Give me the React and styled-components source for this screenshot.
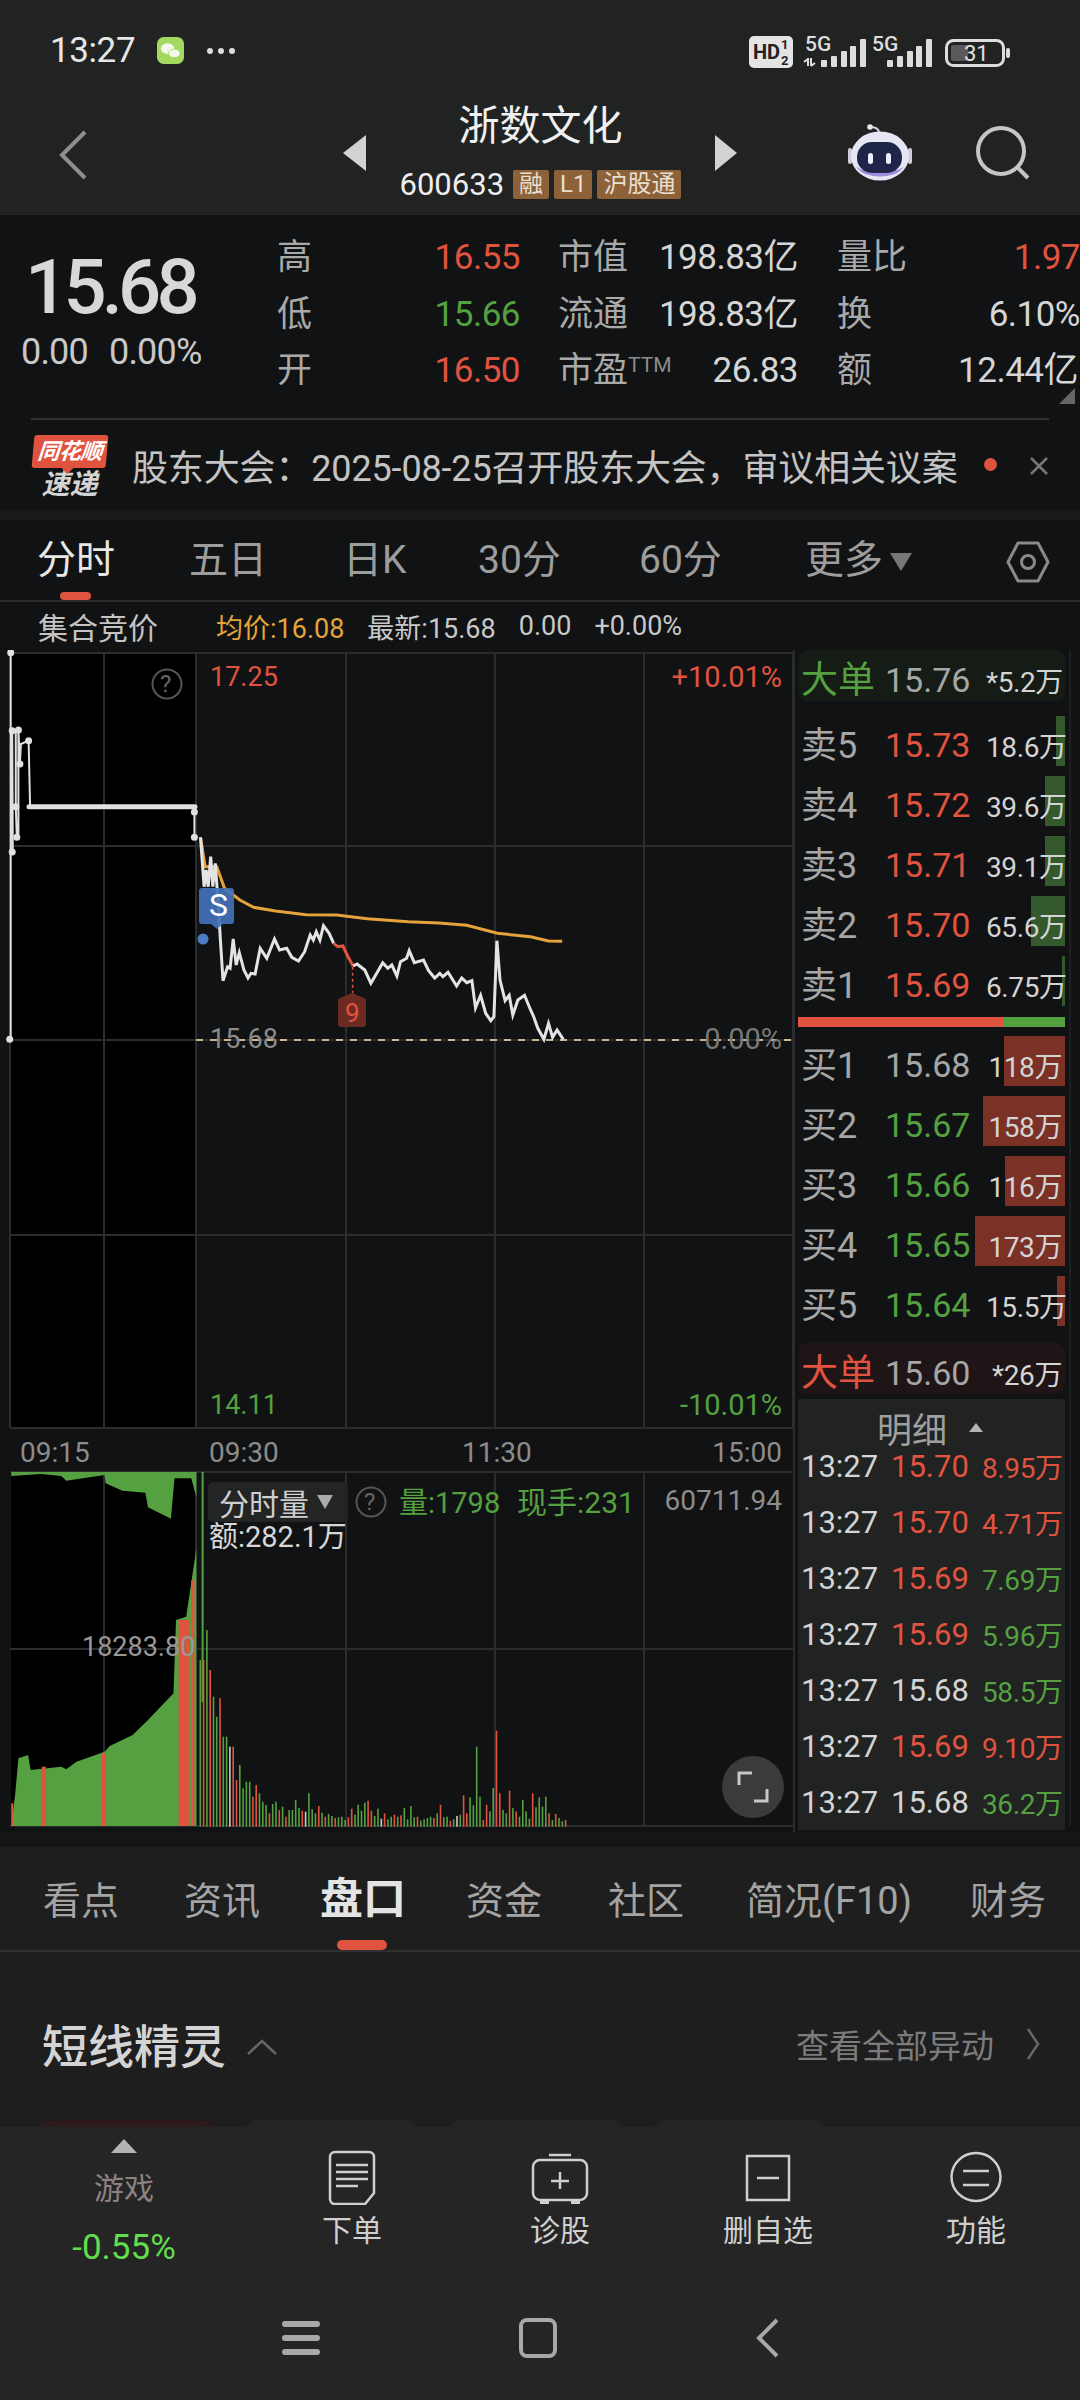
import React from "react";
import styled, { createGlobalStyle } from "styled-components";

const RED = "#e0533f";
const GREEN = "#55a040";
const CJK = `Roboto, "Noto Sans CJK SC", sans-serif`;

const GlobalStyle = createGlobalStyle`
  html, body { margin: 0; padding: 0; background: #1e1e1e; }
  * { box-sizing: border-box; }
  body { font-family: ${CJK}; color: #ddd; }
`;

const Page = styled.div`
  width: 1080px;
  height: 2400px;
  overflow: hidden;
  display: flex;
  flex-direction: column;
  background: #1e1e1e;
`;

/* top status bar + title */
const Top = styled.div`
  height: 215px;
  background: #212322;
  flex: none;
  display: flex;
  flex-direction: column;
`;
const StatusBar = styled.div`
  height: 101px;
  flex: none;
  padding: 0 69px 0 50px;
  display: flex;
  align-items: center;
  justify-content: space-between;
`;
const StatusLeft = styled.div`
  display: flex;
  align-items: center;
  gap: 22px;
`;
const Clock = styled.span`
  font-size: 35px;
  color: #e6e6e6;
  letter-spacing: -0.4px;
`;
const TitleBar = styled.div`
  height: 103px;
  flex: none;
  display: grid;
  grid-template-columns: 100px 1fr 190px;
  padding: 0 50px 0 59px;
  align-items: center;
`;
const BackIcon = styled.svg`
  margin-top: 4px;
`;
const TitleCenter = styled.div`
  display: flex;
  align-items: center;
  gap: 35px;
  padding-left: 184px;
`;
const TitleStack = styled.div`
  display: flex;
  flex-direction: column;
  align-items: center;
  margin-top: -4px;
  width: 277px;
  flex: none;
`;
const Name = styled.div`
  font-size: 41px;
  line-height: 50px;
  color: #f0f0f0;
`;
const CodeRow = styled.div`
  display: flex;
  align-items: center;
  gap: 5px;
  margin-top: 18px;
  white-space: nowrap;
`;
const Code = styled.span`
  font-size: 31px;
  line-height: 32px;
  color: #eee;
  margin-right: 4px;
`;
const Tag = styled.span`
  height: 29px;
  line-height: 29px;
  padding: 0 6px;
  font-size: 24px;
  background: #8d6238;
  color: #e8dfd2;
  border-radius: 2px;
`;
const TitleTools = styled.div`
  display: flex;
  align-items: center;
  justify-content: flex-end;
  gap: 64px;
  svg { flex: none; }
`;

/* quote block */
const Quote = styled.div`
  flex: none;
  height: 295px;
  background: #111213;
  position: relative;
`;
const QuoteTop = styled.div`
  height: 203px;
  display: flex;
`;
const PriceBox = styled.div`
  width: 277px;
  padding-left: 21px;
  padding-top: 30px;
`;
const BigPrice = styled.div`
  font-size: 76px;
  line-height: 84px;
  font-weight: 500;
  color: #d8d8d8;
  padding-left: 4px;
  letter-spacing: -4.8px;
`;
const Change = styled.div`
  display: flex;
  gap: 21px;
  font-size: 36px;
  line-height: 40px;
  color: #c8c8c8;
  margin-top: 3px;
  letter-spacing: -0.8px;
`;
const StatsGrid = styled.div`
  flex: 1;
  display: grid;
  grid-template-columns: 243px 317px 1fr;
  grid-auto-rows: 56.5px;
  padding-top: 13px;
`;
const Stat = styled.div`
  display: flex;
  justify-content: space-between;
  align-items: baseline;
  padding-right: ${(p) => p.$pad ?? 0}px;
  padding-left: ${(p) => p.$lead ?? 0}px;
  white-space: nowrap;
`;
const StatLabel = styled.span`
  font-size: 35px;
  color: #a9a9a9;
  sup {
    font-size: 21px;
    vertical-align: 10px;
    line-height: 0;
    color: #8d8d8d;
  }
`;
const StatValue = styled.span`
  font-size: 35px;
  color: ${(p) => p.$color || "#d6d6d6"};
  letter-spacing: -0.5px;
`;
const Corner = styled.div`
  position: absolute;
  right: 5px;
  top: 173px;
  width: 0;
  height: 0;
  border-left: 16px solid transparent;
  border-bottom: 16px solid #666;
`;
const Notice = styled.div`
  margin: 0 31px;
  border-top: 2px solid #303132;
  height: 92px;
  display: flex;
  align-items: center;
  position: relative;
`;
const NoticeText = styled.div`
  margin-left: 24px;
  font-size: 36px;
  color: #c4c4c4;
  white-space: nowrap;
  letter-spacing: -0.15px;
`;
const LogoBox = styled.div`
  width: 77px;
  display: flex;
  flex-direction: column;
  align-items: center;
  margin-top: 2px;
`;
const LogoFlag = styled.div`
  width: 74px;
  height: 33px;
  background: ${RED};
  border-radius: 3px;
  color: #fff;
  font-size: 22px;
  font-weight: 700;
  font-style: italic;
  text-align: center;
  line-height: 33px;
  position: relative;
  letter-spacing: -0.5px;
  white-space: nowrap;
  transform: skewX(-5deg);
  &::after {
    content: "";
    position: absolute;
    left: 30px;
    bottom: -6px;
    border-left: 6px solid transparent;
    border-right: 6px solid transparent;
    border-top: 6px solid ${RED};
  }
`;
const LogoSub = styled.div`
  font-size: 28px;
  line-height: 26px;
  font-weight: 700;
  font-style: italic;
  color: #d4d4d4;
  margin-top: 4px;
`;
const Dot = styled.span`
  width: 13px;
  height: 13px;
  border-radius: 50%;
  background: ${RED};
  position: absolute;
  left: 953px;
  top: 38px;
`;
const Close = styled.span`
  position: absolute;
  right: 0;
  top: 36px;
`;

/* period tabs */
const Band = styled.div`
  height: 10px;
  flex: none;
  background: #18191a;
`;
const Periods = styled.div`
  height: 82px;
  flex: none;
  background: #111213;
  border-bottom: 2px solid #2c2d2e;
  position: relative;
`;
const PeriodTab = styled.span`
  position: absolute;
  left: ${(p) => p.$x}px;
  top: 17px;
  font-size: 39px;
  line-height: 46px;
  color: ${(p) => (p.$on ? "#e8e8e8" : "#9d9d9d")};
  white-space: nowrap;
`;
const TabMark = styled.i`
  position: absolute;
  left: ${(p) => p.$x}px;
  bottom: 0;
  width: ${(p) => p.$w}px;
  height: ${(p) => p.$h}px;
  border-radius: 5px;
  background: ${RED};
`;
const InfoRow = styled.div`
  height: 48px;
  flex: none;
  background: #111213;
  display: flex;
  align-items: center;
  padding-left: 38px;
  font-size: 27px;
  color: #c8c8c8;
  white-space: nowrap;
`;
const InfoTitle = styled.span`
  font-size: 30px;
  width: 178px;
  color: #c4c4c4;
`;
const InfoItem = styled.span`
  color: ${(p) => p.$color || "#c8c8c8"};
  margin-right: 23px;
`;

/* chart + order book */
const Market = styled.div`
  flex: none;
  height: 1182px;
  background: #111213;
  display: flex;
`;
const ChartCol = styled.div`
  width: 793px;
  position: relative;
  flex: none;
`;
const ChartSvg = styled.svg`
  display: block;
  width: 793px;
  height: 1182px;
`;
const ChartLabel = styled.span`
  position: absolute;
  left: ${(p) => (p.$x !== undefined ? `${p.$x}px` : "auto")};
  right: ${(p) => (p.$r !== undefined ? `${p.$r}px` : "auto")};
  top: ${(p) => p.$y}px;
  font-size: ${(p) => p.$size || 27}px;
  line-height: 34px;
  color: ${(p) => p.$color || "#8f8f8f"};
  white-space: nowrap;
`;
const VolPicker = styled.div`
  position: absolute;
  left: 208px;
  top: 832px;
  width: 140px;
  height: 40px;
  border-radius: 5px;
  background: #232424;
  display: flex;
  align-items: center;
  padding-left: 11px;
  gap: 8px;
  font-size: 30px;
  color: #cfcfcf;
`;
const Expand = styled.div`
  position: absolute;
  left: 722px;
  top: 1106px;
  width: 62px;
  height: 62px;
  border-radius: 50%;
  background: #3a3b3b;
  display: flex;
  align-items: center;
  justify-content: center;
`;
const Book = styled.div`
  flex: 1;
  border-left: 2px solid #2a2b2c;
  display: flex;
  flex-direction: column;
  padding: 0 4px 0 3px;
  position: relative;
  &::after {
    content: "";
    position: absolute;
    top: 0;
    bottom: 6px;
    left: 274px;
    width: 2px;
    background: #1e1f20;
  }
`;
const BigOrder = styled.div`
  height: 51px;
  width: 267px;
  flex: none;
  border-radius: 9px;
  background: ${(p) => p.$bg};
  display: grid;
  grid-template-columns: 84px 101px 1fr;
  align-items: center;
  padding: 0 0 9px 3px;
  margin-top: ${(p) => p.$top}px;
  margin-bottom: ${(p) => p.$bottom}px;
`;
const BigName = styled.span`
  font-size: 37px;
  margin-bottom: 6px;
  color: ${(p) => p.$color};
  white-space: nowrap;
`;
const Level = styled.div`
  height: 50px;
  width: 267px;
  flex: none;
  margin-bottom: 10px;
  display: grid;
  grid-template-columns: 84px 101px 1fr;
  align-items: center;
  padding: 0 0 9px 3px;
  position: relative;
`;
const LevelName = styled.span`
  font-size: 36px;
  margin-bottom: 6px;
  color: #a6a6a6;
  white-space: nowrap;
  position: relative;
`;
const LevelPrice = styled.span`
  font-size: 34px;
  color: ${(p) => p.$color || "#a6a6a6"};
  position: relative;
`;
const LevelVol = styled.span`
  font-size: 28px;
  color: #d4d4d4;
  text-align: right;
  padding-right: 3px;
  white-space: nowrap;
  position: relative;
  letter-spacing: -0.4px;
`;
const VolBar = styled.i`
  position: absolute;
  right: 0;
  top: 0;
  height: 50px;
  background: ${(p) => p.$color};
`;
const Ratio = styled.div`
  height: 10px;
  width: 267px;
  flex: none;
  margin: 1px 0 9px;
  display: flex;
  background: ${GREEN};
  &::before {
    content: "";
    width: 206px;
    background: ${RED};
  }
`;
const Ticks = styled.div`
  flex: 1;
  width: 267px;
  margin-bottom: 7px;
  background: #212222;
  display: flex;
  flex-direction: column;
`;
const TicksHead = styled.div`
  height: 39px;
  flex: none;
  display: flex;
  align-items: center;
  padding: 18px 0 0 79px;
  gap: 22px;
  font-size: 35px;
  color: #9f9f9f;
`;
const Triangle = styled.i`
  width: 0;
  height: 0;
  border-left: ${(p) => p.$w}px solid transparent;
  border-right: ${(p) => p.$w}px solid transparent;
  border-bottom: ${(p) => p.$h}px solid ${(p) => p.$color || "#b4b4b4"};
`;
const Tick = styled.div`
  height: 56px;
  flex: none;
  display: grid;
  grid-template-columns: 90px 91px 1fr;
  align-items: center;
  padding-left: 3px;
  font-size: 31px;
  color: #d4d4d4;
  white-space: nowrap;
`;
const TickPrice = styled.span`
  color: ${(p) => p.$color || "#d4d4d4"};
  font-size: 31px;
`;
const TickVol = styled.span`
  color: ${(p) => p.$color};
  font-size: 28px;
  letter-spacing: -0.4px;
`;

/* lower tabs */
const LowerGap = styled.div`
  height: 15px;
  flex: none;
  background: #141515;
`;
const LowerTabs = styled.div`
  height: 105px;
  flex: none;
  border-bottom: 2px solid #2f3030;
  position: relative;
`;
const LowerTab = styled.span`
  position: absolute;
  left: ${(p) => p.$x}px;
  top: ${(p) => (p.$on ? 27 : 29)}px;
  font-size: ${(p) => (p.$on ? 43 : 38)}px;
  line-height: 50px;
  font-weight: ${(p) => (p.$on ? 700 : 400)};
  color: ${(p) => (p.$on ? "#e4e4e4" : "#a4a4a4")};
  white-space: nowrap;
`;
const Section = styled.div`
  flex: 1;
  position: relative;
  padding: 65px 40px 0 42px;
  display: flex;
  align-items: flex-start;
  justify-content: space-between;
`;
const SectionTitle = styled.div`
  display: flex;
  align-items: center;
  gap: 20px;
  font-size: 46px;
  line-height: 60px;
  font-weight: 500;
  color: #d4d4d4;
`;
const SectionMore = styled.div`
  display: flex;
  align-items: center;
  gap: 32px;
  height: 60px;
  margin-top: -3px;
  font-size: 33px;
  color: #7c7c7c;
`;
const Cards = styled.div`
  position: absolute;
  left: 41px;
  top: 168px;
  display: flex;
  gap: 31px;
`;
const Card = styled.i`
  width: 173px;
  height: 30px;
  border-radius: 12px 12px 0 0;
  background: ${(p) => p.$bg};
`;

/* bottom bar */
const Bottom = styled.div`
  height: 273px;
  flex: none;
  background: #252525;
  position: relative;
  display: flex;
  flex-direction: column;
`;
const ToolRow = styled.div`
  height: 168px;
  display: grid;
  grid-template-columns: 248px repeat(4, 208px);
`;
const GameBox = styled.div`
  display: flex;
  flex-direction: column;
  align-items: center;
  padding-top: 12px;
`;
const GameName = styled.span`
  font-size: 30px;
  line-height: 36px;
  color: #8c8282;
  margin-top: 18px;
`;
const GamePct = styled.span`
  font-size: 35px;
  line-height: 40px;
  color: #62dd4e;
  margin-top: 21px;
`;
const Tool = styled.div`
  display: flex;
  flex-direction: column;
  align-items: center;
  padding-top: 22px;
  font-size: 30px;
  line-height: 36px;
  color: #cfcfcf;
  svg { display: block; margin-bottom: 8px; }
`;
const NavRow = styled.div`
  flex: 1;
  display: flex;
  align-items: center;
  gap: 199px;
  padding: 0 0 20px 282px;
`;

const sells = [
  ["卖5", "15.73", "18.6万", 9],
  ["卖4", "15.72", "39.6万", 20],
  ["卖3", "15.71", "39.1万", 20],
  ["卖2", "15.70", "65.6万", 34],
  ["卖1", "15.69", "6.75万", 3],
];
const buys = [
  ["买1", "15.68", "118万", 61, null],
  ["买2", "15.67", "158万", 82, GREEN],
  ["买3", "15.66", "116万", 60, GREEN],
  ["买4", "15.65", "173万", 90, GREEN],
  ["买5", "15.64", "15.5万", 8, GREEN],
];
const ticks = [
  ["15.70", RED, "8.95万", RED],
  ["15.70", RED, "4.71万", RED],
  ["15.69", RED, "7.69万", GREEN],
  ["15.69", RED, "5.96万", GREEN],
  ["15.68", null, "58.5万", GREEN],
  ["15.69", RED, "9.10万", RED],
  ["15.68", null, "36.2万", GREEN],
];

// points read from the reference crop, in crop units (x / 1.96, 640 + y / 3)
const zx = (x) => +(x / 1.96).toFixed(1);
const zy = (y) => +(y / 3 - 10).toFixed(1);
const toPath = (pts) => pts.map(([x, y], i) => `${i ? "L" : "M"}${zx(x)} ${zy(y)}`).join(" ");

const auction = [
  [21, 38], [21, 1198], [21, 640], [25, 636], [24, 272], [31, 272], [31, 500], [33, 592], [36, 592], [36, 270], [39, 372], [41, 312],
  [56, 302], [59, 500], [381, 500], [381, 516], [381, 592],
];
const priceA = [
  [393, 592], [400, 740], [404, 690], [408, 740], [413, 650], [417, 740], [422, 670], [428, 800], [432, 900], [437, 1022],
  [446, 980], [451, 985], [457, 897], [463, 975], [469, 938], [478, 990], [486, 1014], [492, 1000], [500, 1002], [510, 925],
  [523, 955], [538, 897], [548, 930], [562, 925], [572, 952], [585, 963], [597, 935], [608, 885], [614, 900], [620, 875],
  [627, 900], [634, 857], [645, 880], [654, 910],
];
const priceRed = [[654, 910], [662, 920], [672, 918], [682, 950], [692, 978]];
const priceB = [
  [692, 978], [700, 972], [715, 990], [727, 1030], [742, 990], [750, 968], [760, 985], [768, 975], [778, 1008], [785, 965],
  [797, 955], [802, 932], [812, 968], [830, 960], [840, 992], [852, 1014], [862, 1000], [868, 1010], [878, 997], [895, 1038],
  [905, 1014], [915, 1028], [925, 1022], [932, 1104], [942, 1066], [952, 1120], [962, 1142], [968, 1130], [974, 902], [980, 1020],
  [990, 1082], [998, 1066], [1005, 1125], [1015, 1080], [1028, 1066], [1040, 1110], [1046, 1130], [1054, 1165], [1066, 1198], [1075, 1150],
  [1083, 1192], [1092, 1170], [1104, 1198],
];
const avg = [
  [393, 592], [402, 680], [425, 680], [440, 745], [470, 780], [497, 802], [540, 813], [600, 824], [660, 825], [720, 836],
  [800, 845], [860, 849], [915, 856], [975, 880], [1040, 890], [1075, 903], [1102, 904],
];

// volume histogram, crop units with bottom at y=1218 (second crop starts at 1420)
const vy = (y) => +(1420 + y / 3 - 650).toFixed(1);
const vpath = (pts) => pts.map(([x, y], i) => `${i ? "L" : "M"}${zx(x)} ${vy(y)}`).join(" ");
const auctionVolLow = [
  [22, 1218], [30, 1120], [36, 1015], [55, 1005], [60, 1050], [120, 1040], [130, 1048], [150, 1025], [205, 995], [215, 978],
  [260, 945], [290, 900], [340, 820], [345, 600], [365, 590], [385, 385], [385, 1218],
];
const auctionVolHigh = [
  [22, 156], [22, 168], [80, 162], [120, 168], [130, 182], [205, 165], [207, 190], [240, 212], [285, 218], [290, 262],
  [335, 296], [342, 175], [375, 175], [385, 232], [385, 156],
];
const redStrips = [[22, 4, 1150], [82, 8, 1040], [199, 9, 1000], [350, 22, 600], [375, 6, 480]];

const BAR_HEIGHTS = [
  500, 500, 590, 470, 390, 330, 385, 270, 270, 240,
  240, 140, 185, 115, 135, 135, 90, 125, 100, 75,
  65, 40, 68, 75, 50, 60, 30, 50, 50, 80,
  56, 48, 45, 100, 52, 40, 62, 42, 30, 38,
  32, 26, 28, 30, 20, 28, 54, 36, 66, 48,
  72, 78, 48, 32, 54, 24, 40, 22, 30, 36,
  30, 34, 56, 22, 62, 28, 30, 18, 22, 26,
  30, 26, 40, 66, 28, 30, 18, 22, 32, 36,
  94, 40, 88, 64, 240, 90, 20, 66, 46, 116,
  288, 100, 50, 40, 108, 56, 46, 30, 80, 46,
  24, 100, 58, 88, 60, 90, 40, 20, 38, 26, 16, 20,
];
const barColor = (i) => (i === 90 || i % 5 === 1 || i % 7 === 3 ? RED : i % 23 === 9 ? "#ccc" : GREEN);

const Robot = () => (
  <svg width="64" height="57" viewBox="0 0 64 57">
    <path d="M22 3c6 0 9 2 9 6" fill="none" stroke="#d8d8e8" strokeWidth="2" />
    <circle cx="22" cy="3" r="2.8" fill="#e8e8f0" />
    <rect x="0" y="24" width="4" height="16" rx="2" fill="#cfcfdc" />
    <rect x="60" y="24" width="4" height="16" rx="2" fill="#cfcfdc" />
    <ellipse cx="32" cy="32" rx="29" ry="24.5" fill="#e6e6f4" />
    <path d="M8 42c6 14 42 14 48 0-6 8-42 8-48 0z" fill="#a08ce0" />
    <rect x="9" y="18" width="45" height="31" rx="15" fill="#1e2548" />
    <rect x="20" y="29" width="5" height="11" rx="2.5" fill="#eef" />
    <rect x="38" y="29" width="5" height="11" rx="2.5" fill="#eef" />
  </svg>
);

const StatusIcons = () => (
  <svg width="262" height="36" viewBox="749 30 262 36">
    <rect x="749" y="33" width="44" height="32" rx="5" fill="#e4e4e4" />
    <text x="753" y="56" fontSize="20" fontWeight="700" fill="#222" fontFamily="Roboto">HD</text>
    <text x="781" y="46" fontSize="13" fontWeight="700" fill="#222" fontFamily="Roboto">1</text>
    <text x="781" y="62" fontSize="13" fontWeight="700" fill="#222" fontFamily="Roboto">2</text>
    <text x="805" y="48" fontSize="21" fontWeight="500" fill="#ddd" fontFamily="Roboto">5G</text>
    <path d="M808 55v8m-4-4l4-3m3-1v8m0 0l4-3" stroke="#ddd" strokeWidth="2" fill="none" />
    {[[821, 57], [831, 53], [841, 48], [850, 43], [860, 36]].map(([x, y]) => (
      <rect key={x} x={x} y={y} width="6" height={64 - y} rx="1" fill="#ddd" />
    ))}
    <text x="872" y="48" fontSize="21" fontWeight="500" fill="#ddd" fontFamily="Roboto">5G</text>
    {[[887, 57], [897, 53], [907, 48], [916, 43], [926, 36]].map(([x, y]) => (
      <rect key={x} x={x} y={y} width="6" height={64 - y} rx="1" fill="#ddd" />
    ))}
    <rect x="946.5" y="37.5" width="57" height="25" rx="7" fill="none" stroke="#ddd" strokeWidth="3" />
    <rect x="951" y="42" width="17" height="16" rx="2" fill="#5a5a5a" />
    <text x="964" y="58" fontSize="22" fill="#e4e4e4" fontFamily="Roboto">31</text>
    <rect x="1006" y="45" width="4" height="10" rx="2" fill="#ddd" />
  </svg>
);

export default function App() {
  const bars = BAR_HEIGHTS.map((h, i) => ({
    x: zx(391 + i * 6.45),
    y: vy(1220 - h),
    h: h / 3,
    c: barColor(i),
  }));

  return (
    <Page>
      <GlobalStyle />
      <Top>
        <StatusBar>
          <StatusLeft>
            <Clock>13:27</Clock>
            <svg width="27" height="27" viewBox="0 0 28 28">
              <rect width="28" height="28" rx="7" fill="#a3d861" />
              <ellipse cx="11" cy="12" rx="7" ry="5.5" fill="#f4f8ea" />
              <ellipse cx="18" cy="17" rx="6" ry="4.5" fill="#f4f8ea" stroke="#a3d861" />
            </svg>
            <svg width="32" height="8" viewBox="0 0 32 8">
              <circle cx="4" cy="4" r="3" fill="#ddd" />
              <circle cx="15" cy="4" r="3" fill="#ddd" />
              <circle cx="26" cy="4" r="3" fill="#ddd" />
            </svg>
          </StatusLeft>
          <StatusIcons />
        </StatusBar>
        <TitleBar>
          <BackIcon width="28" height="50" viewBox="0 0 28 50">
            <path d="M26 2L3 25l23 23" fill="none" stroke="#8e8e8e" strokeWidth="4" />
          </BackIcon>
          <TitleCenter>
            <svg width="24" height="36" viewBox="0 0 24 36" style={{ flex: "none" }}>
              <path d="M23 0v36L0 18z" fill="#d2d2d2" />
            </svg>
            <TitleStack>
              <Name>浙数文化</Name>
              <CodeRow>
                <Code>600633</Code>
                <Tag>融</Tag>
                <Tag>L1</Tag>
                <Tag>沪股通</Tag>
              </CodeRow>
            </TitleStack>
            <svg width="24" height="36" viewBox="0 0 24 36" style={{ flex: "none" }}>
              <path d="M1 0v36l22-18z" fill="#d2d2d2" />
            </svg>
          </TitleCenter>
          <TitleTools>
            <Robot />
            <svg width="54" height="54" viewBox="0 0 54 54">
              <circle cx="25" cy="25" r="23" fill="none" stroke="#c6c6c6" strokeWidth="4" />
              <path d="M41 41l11 11" stroke="#c6c6c6" strokeWidth="4" />
            </svg>
          </TitleTools>
        </TitleBar>
      </Top>

      <Quote>
        <QuoteTop>
          <PriceBox>
            <BigPrice>15.68</BigPrice>
            <Change>
              <span>0.00</span>
              <span>0.00%</span>
            </Change>
          </PriceBox>
          <StatsGrid>
            <Stat>
              <StatLabel>高</StatLabel>
              <StatValue $color={RED}>16.55</StatValue>
            </Stat>
            <Stat $pad={39} $lead={38}>
              <StatLabel>市值</StatLabel>
              <StatValue>198.83亿</StatValue>
            </Stat>
            <Stat>
              <StatLabel>量比</StatLabel>
              <StatValue $color={RED}>1.97</StatValue>
            </Stat>
            <Stat>
              <StatLabel>低</StatLabel>
              <StatValue $color={GREEN}>15.66</StatValue>
            </Stat>
            <Stat $pad={39} $lead={38}>
              <StatLabel>流通</StatLabel>
              <StatValue>198.83亿</StatValue>
            </Stat>
            <Stat>
              <StatLabel>换</StatLabel>
              <StatValue>6.10%</StatValue>
            </Stat>
            <Stat>
              <StatLabel>开</StatLabel>
              <StatValue $color={RED}>16.50</StatValue>
            </Stat>
            <Stat $pad={39} $lead={38}>
              <StatLabel>
                市盈<sup>TTM</sup>
              </StatLabel>
              <StatValue>26.83</StatValue>
            </Stat>
            <Stat $pad={2}>
              <StatLabel>额</StatLabel>
              <StatValue>12.44亿</StatValue>
            </Stat>
          </StatsGrid>
        </QuoteTop>
        <Corner />
        <Notice>
          <LogoBox>
            <LogoFlag>同花顺</LogoFlag>
            <LogoSub>速递</LogoSub>
          </LogoBox>
          <NoticeText>股东大会：2025-08-25召开股东大会，审议相关议案</NoticeText>
          <Dot />
          <Close>
            <svg width="20" height="20" viewBox="0 0 20 20">
              <path d="M2 2l16 16M18 2L2 18" stroke="#777" strokeWidth="2.5" />
            </svg>
          </Close>
        </Notice>
      </Quote>

      <Band />
      <Periods>
        <PeriodTab $x={37} $on>分时</PeriodTab>
        <PeriodTab $x={189}>五日</PeriodTab>
        <PeriodTab $x={343}>日K</PeriodTab>
        <PeriodTab $x={478}>30分</PeriodTab>
        <PeriodTab $x={639}>60分</PeriodTab>
        <PeriodTab $x={805}>更多</PeriodTab>
        <svg width="22" height="18" viewBox="0 0 22 18" style={{ position: "absolute", left: 890, top: 33 }}>
          <path d="M0 0h22L11 18z" fill="#777" />
        </svg>
        <svg width="44" height="42" viewBox="0 0 44 42" style={{ position: "absolute", left: 1006, top: 21 }}>
          <path d="M12 2h20l10 19-10 19H12L2 21z" fill="none" stroke="#8a8a8a" strokeWidth="3" strokeLinejoin="round" />
          <circle cx="22" cy="21" r="6.5" fill="none" stroke="#8a8a8a" strokeWidth="3" />
        </svg>
        <TabMark $x={60} $w={31} $h={8} />
      </Periods>
      <InfoRow>
        <InfoTitle>集合竞价</InfoTitle>
        <InfoItem $color="#e3a53a">均价:16.08</InfoItem>
        <InfoItem>最新:15.68</InfoItem>
        <InfoItem>0.00</InfoItem>
        <InfoItem>+0.00%</InfoItem>
      </InfoRow>

      <Market>
        <ChartCol>
          <ChartSvg viewBox="0 0 793 1182">
            <rect x="11" y="2" width="185" height="776" fill="#000" />
            <rect x="11" y="822" width="185" height="354" fill="#000" />
            <g stroke="#2b2c2d" strokeWidth="2" fill="none">
              <path d="M10 3H793M10 196H793M10 390H793M10 585H793M10 778H793M10 822H793M10 999H793M10 1176H793" />
              <path d="M104 2V778M196 2V778M346 2V778M495 2V778M644 2V778M104 822V1176M196 822V1176M346 822V1176M495 822V1176M644 822V1176" />
              <path d="M10 2V778M793 2V778" />
            </g>

            {/* volume, auction part */}
            <path d={`${vpath(auctionVolLow)}Z`} fill={GREEN} />
            <path d={`${vpath(auctionVolHigh)}Z`} fill={GREEN} />
            {redStrips.map(([x, w, top]) => (
              <rect key={x} x={zx(x)} y={vy(top)} width={w / 1.96} height={(1218 - top) / 3} fill={RED} />
            ))}
            <path d={`M${zx(397)} 822V1052`} stroke={GREEN} strokeWidth="2" />
            {bars.map((b, i) => (
              <rect key={i} x={b.x} y={b.y} width="1.6" height={b.h} fill={b.c} />
            ))}

            {/* price */}
            <path d="M196 390H793" stroke="#c9b690" strokeWidth="2" strokeDasharray="7 7" />
            <path d={toPath(auction)} fill="none" stroke="#e0e0e0" strokeWidth="2" />
            <path d={`M29 ${zy(500)}H195`} stroke="#e0e0e0" strokeWidth="5" strokeLinecap="round" />
            {[[21, 38], [19, 1198], [24, 272], [36, 270], [56, 302], [31, 500], [33, 592], [24, 636], [381, 516], [381, 592], [39, 372]].map(([x, y]) => (
              <circle key={`${x}-${y}`} cx={zx(x)} cy={zy(y)} r="3.5" fill="#e0e0e0" />
            ))}
            <path d={toPath(avg)} fill="none" stroke="#e5a33c" strokeWidth="3" />
            <path d={toPath(priceA)} fill="none" stroke="#e4e4e4" strokeWidth="3" />
            <path d={toPath(priceRed)} fill="none" stroke={RED} strokeWidth="3" />
            <path d={toPath(priceB)} fill="none" stroke="#e4e4e4" strokeWidth="3" />

            {/* S marker */}
            <path d="M199 241a3 3 0 0 1 3-3h29a3 3 0 0 1 3 3v30a3 3 0 0 1-3 3h-8l-6 5-6-5h-9a3 3 0 0 1-3-3z" fill="#4272b8" fillOpacity="0.92" />
            <circle cx="203" cy="289" r="5.5" fill="#4a7cc4" />
            {/* 9 marker */}
            <path d={`M${zx(691)} ${zy(980)}V${zy(1060)}`} stroke={RED} strokeDasharray="3 3" strokeWidth="1.5" />
            <path d="M338 351a3 3 0 0 1 2-3l12-5 12 5a3 3 0 0 1 2 3v23a3 3 0 0 1-3 3h-22a3 3 0 0 1-3-3z" fill="#6b2a22" />

            {/* question marks */}
            <circle cx="167" cy="34" r="14.5" fill="none" stroke="#555" strokeWidth="2" />
            <circle cx="371" cy="852" r="14.5" fill="none" stroke="#555" strokeWidth="2" />
          </ChartSvg>

          <ChartLabel $x={210} $y={10} $color={RED}>17.25</ChartLabel>
          <ChartLabel $r={11} $y={10} $color={RED} $size={29}>+10.01%</ChartLabel>
          <ChartLabel $x={210} $y={372} $color="#8a8a8a">15.68</ChartLabel>
          <ChartLabel $r={11} $y={372} $color="#777" $size={29}>0.00%</ChartLabel>
          <ChartLabel $x={210} $y={738} $color={GREEN}>14.11</ChartLabel>
          <ChartLabel $r={11} $y={738} $color={GREEN} $size={29}>-10.01%</ChartLabel>
          <ChartLabel $x={160} $y={17} $color="#666" $size={24}>?</ChartLabel>
          <ChartLabel $x={364} $y={835} $color="#666" $size={24}>?</ChartLabel>
          <ChartLabel $x={209} $y={238} $color="#fff" $size={32}>S</ChartLabel>
          <ChartLabel $x={345} $y={346} $color={RED} $size={26}>9</ChartLabel>

          <ChartLabel $x={20} $y={786} $color="#8c8c8c" $size={28}>09:15</ChartLabel>
          <ChartLabel $x={209} $y={786} $color="#8c8c8c" $size={28}>09:30</ChartLabel>
          <ChartLabel $x={462} $y={786} $color="#8c8c8c" $size={28}>11:30</ChartLabel>
          <ChartLabel $r={11} $y={786} $color="#8c8c8c" $size={28}>15:00</ChartLabel>

          <VolPicker>
            分时量
            <svg width="16" height="14" viewBox="0 0 16 14">
              <path d="M0 0h16L8 14z" fill="#aaa" />
            </svg>
          </VolPicker>
          <ChartLabel $x={209} $y={870} $color="#d8d8d8" $size={29}>额:282.1万</ChartLabel>
          <ChartLabel $x={399} $y={836} $color={GREEN} $size={29}>量:1798</ChartLabel>
          <ChartLabel $x={517} $y={836} $color={GREEN} $size={30}>现手:231</ChartLabel>
          <ChartLabel $r={11} $y={834} $color="#8d8d8d" $size={28}>60711.94</ChartLabel>
          <ChartLabel $x={82} $y={980} $color="#999">18283.80</ChartLabel>

          <Expand>
            <svg width="32" height="32" viewBox="0 0 32 32">
              <path d="M2 14V2h13M30 18v12H17" fill="none" stroke="#c8c8c8" strokeWidth="3" />
            </svg>
          </Expand>
        </ChartCol>

        <Book>
          <BigOrder $bg="#141c15" $top={0} $bottom={15}>
            <BigName $color={GREEN}>大单</BigName>
            <LevelPrice>15.76</LevelPrice>
            <LevelVol>*5.2万</LevelVol>
          </BigOrder>
          {sells.map(([name, price, vol, w]) => (
            <Level key={name}>
              <VolBar $color="#33592c" style={{ width: w }} />
              <LevelName>{name}</LevelName>
              <LevelPrice $color={RED}>{price}</LevelPrice>
              <LevelVol>{vol}</LevelVol>
            </Level>
          ))}
          <Ratio />
          {buys.map(([name, price, vol, w, color]) => (
            <Level key={name}>
              <VolBar $color="#7b3126" style={{ width: w }} />
              <LevelName>{name}</LevelName>
              <LevelPrice $color={color}>{price}</LevelPrice>
              <LevelVol>{vol}</LevelVol>
            </Level>
          ))}
          <BigOrder $bg="#1f1516" $top={7} $bottom={5}>
            <BigName $color={RED}>大单</BigName>
            <LevelPrice>15.60</LevelPrice>
            <LevelVol>*26万</LevelVol>
          </BigOrder>
          <Ticks>
            <TicksHead>
              明细
              <Triangle $w={7} $h={9} />
            </TicksHead>
            {ticks.map(([price, pc, vol, vc], i) => (
              <Tick key={i}>
                <span>13:27</span>
                <TickPrice $color={pc}>{price}</TickPrice>
                <TickVol $color={vc}>{vol}</TickVol>
              </Tick>
            ))}
          </Ticks>
        </Book>
      </Market>

      <LowerGap />
      <LowerTabs>
        <LowerTab $x={43}>看点</LowerTab>
        <LowerTab $x={184}>资讯</LowerTab>
        <LowerTab $x={320} $on>盘口</LowerTab>
        <LowerTab $x={466}>资金</LowerTab>
        <LowerTab $x={608}>社区</LowerTab>
        <LowerTab $x={746}>简况(F10)</LowerTab>
        <LowerTab $x={970}>财务</LowerTab>
        <TabMark $x={337} $w={50} $h={10} />
      </LowerTabs>
      <Section>
        <SectionTitle>
          短线精灵
          <svg width="32" height="18" viewBox="0 0 32 18">
            <path d="M2 16L16 3l14 13" fill="none" stroke="#666" strokeWidth="2.5" />
          </svg>
        </SectionTitle>
        <SectionMore>
          查看全部异动
          <svg width="14" height="34" viewBox="0 0 14 34">
            <path d="M2 2l10 15L2 32" fill="none" stroke="#666" strokeWidth="2.5" />
          </svg>
        </SectionMore>
        <Cards>
          <Card $bg="#2d1a1a" />
          <Card $bg="#232424" />
          <Card $bg="#232424" />
          <Card $bg="#232424" />
        </Cards>
      </Section>

      <Bottom>
        <ToolRow>
          <GameBox>
            <Triangle $w={13} $h={14} />
            <GameName>游戏</GameName>
            <GamePct>-0.55%</GamePct>
          </GameBox>
          <Tool>
            <svg width="48" height="56" viewBox="0 0 48 56">
              <path d="M7 3h34a5 5 0 0 1 5 5v36l-9 11H7a5 5 0 0 1-5-5V8a5 5 0 0 1 5-5z" fill="none" stroke="#cfcfcf" strokeWidth="2.5" />
              <path d="M8 16h32M8 23h32M8 30h32M8 37h22" stroke="#cfcfcf" strokeWidth="2.5" />
            </svg>
            下单
          </Tool>
          <Tool>
            <svg width="58" height="56" viewBox="0 0 58 56">
              <path d="M18 6h22" stroke="#cfcfcf" strokeWidth="2.5" />
              <rect x="2" y="11" width="54" height="40" rx="7" fill="none" stroke="#cfcfcf" strokeWidth="2.5" />
              <path d="M29 23v17M20 32h18" stroke="#cfcfcf" strokeWidth="2.5" />
              <path d="M9 51h9v4H9zM40 51h9v4h-9z" fill="#cfcfcf" />
            </svg>
            诊股
          </Tool>
          <Tool>
            <svg width="46" height="56" viewBox="0 0 46 56">
              <rect x="2" y="7" width="42" height="44" fill="none" stroke="#cfcfcf" strokeWidth="2.5" />
              <path d="M12 29h22" stroke="#cfcfcf" strokeWidth="2.5" />
            </svg>
            删自选
          </Tool>
          <Tool>
            <svg width="52" height="56" viewBox="0 0 52 56">
              <ellipse cx="26" cy="28" rx="24.5" ry="24" fill="none" stroke="#cfcfcf" strokeWidth="2.5" />
              <path d="M13 22h26M13 36h26" stroke="#cfcfcf" strokeWidth="2.5" />
            </svg>
            功能
          </Tool>
        </ToolRow>
        <NavRow>
          <svg width="38" height="36" viewBox="0 0 38 36">
            <path d="M3 4h32M3 18h32M3 32h32" stroke="#a8a8a8" strokeWidth="6" strokeLinecap="round" />
          </svg>
          <svg width="38" height="40" viewBox="0 0 38 40">
            <rect x="2" y="2" width="34" height="36" rx="6" fill="none" stroke="#a8a8a8" strokeWidth="4" />
          </svg>
          <svg width="24" height="40" viewBox="0 0 24 40">
            <path d="M21 2L3 20l18 18" fill="none" stroke="#a8a8a8" strokeWidth="4" />
          </svg>
        </NavRow>
      </Bottom>
    </Page>
  );
}
